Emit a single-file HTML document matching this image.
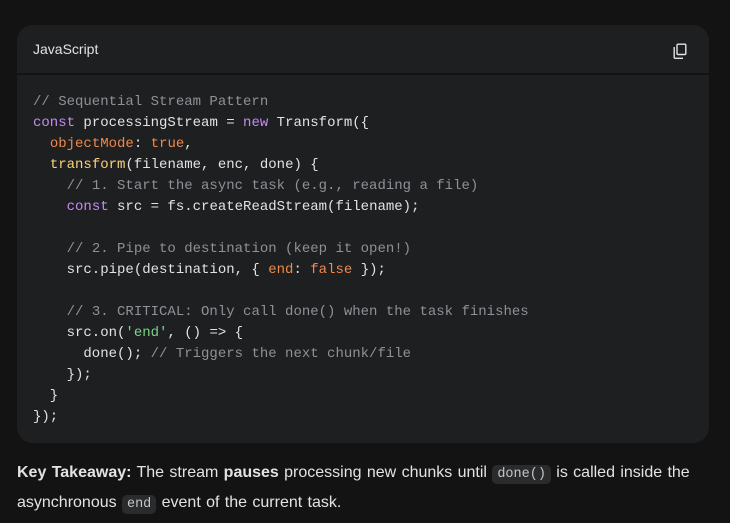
<!DOCTYPE html>
<html><head><meta charset="utf-8"><style>
html,body{margin:0;padding:0;background:#131314;width:730px;height:523px;overflow:hidden;}
body{font-family:"Liberation Sans",sans-serif;color:#e3e3e3;position:relative;}
.block{position:absolute;left:17px;top:25px;width:692px;height:418px;border-radius:16px;overflow:hidden;background:#1e1f20;}
.hdr{height:48px;background:#1e1f20;border-bottom:2px solid #131314;position:relative;}
.hdr span{position:absolute;left:16px;top:16px;font-size:14px;color:#e3e3e3;}
.copy{position:absolute;right:22px;top:18px;}
pre{margin:0;position:absolute;left:16px;top:67px;font-family:"Liberation Mono",monospace;font-size:14px;line-height:21px;color:#e3e3e3;}
.c{color:#8e9198}.k{color:#c58af9}.o{color:#f1884a}.f{color:#fdd27a}.s{color:#7fd18b}
p{position:absolute;left:17px;top:459px;width:710px;margin:0;font-size:16px;line-height:28px;word-spacing:0.9px;}
code{font-family:"Liberation Mono",monospace;font-size:13.5px;background:#2a2b2d;border-radius:5px;padding:2px 5px;color:#c4c7c5;word-spacing:0;}
</style></head><body>
<div class="block">
<div class="hdr"><span>JavaScript</span>
<svg class="copy" width="14" height="16" viewBox="0 0 14 16"><rect x="4" y="1.2" width="8.8" height="10.3" rx="1" fill="none" stroke="#e3e3e3" stroke-width="1.4"/><path d="M1.2 4v10.3a1 1 0 0 0 1 1H10" fill="none" stroke="#e3e3e3" stroke-width="1.4"/></svg>
</div>
<pre><span class="c">// Sequential Stream Pattern</span>
<span class="k">const</span> processingStream = <span class="k">new</span> Transform({
  <span class="o">objectMode</span>: <span class="o">true</span>,
  <span class="f">transform</span>(filename, enc, done) {
    <span class="c">// 1. Start the async task (e.g., reading a file)</span>
    <span class="k">const</span> src = fs.createReadStream(filename);

    <span class="c">// 2. Pipe to destination (keep it open!)</span>
    src.pipe(destination, { <span class="o">end</span>: <span class="o">false</span> });

    <span class="c">// 3. CRITICAL: Only call done() when the task finishes</span>
    src.on(<span class="s">'end'</span>, () =&gt; {
      done(); <span class="c">// Triggers the next chunk/file</span>
    });
  }
});</pre>
</div>
<p><b>Key Takeaway:</b> The stream <b>pauses</b> processing new chunks until <code>done()</code> is called inside the asynchronous <code>end</code> event of the current task.</p>
</body></html>
